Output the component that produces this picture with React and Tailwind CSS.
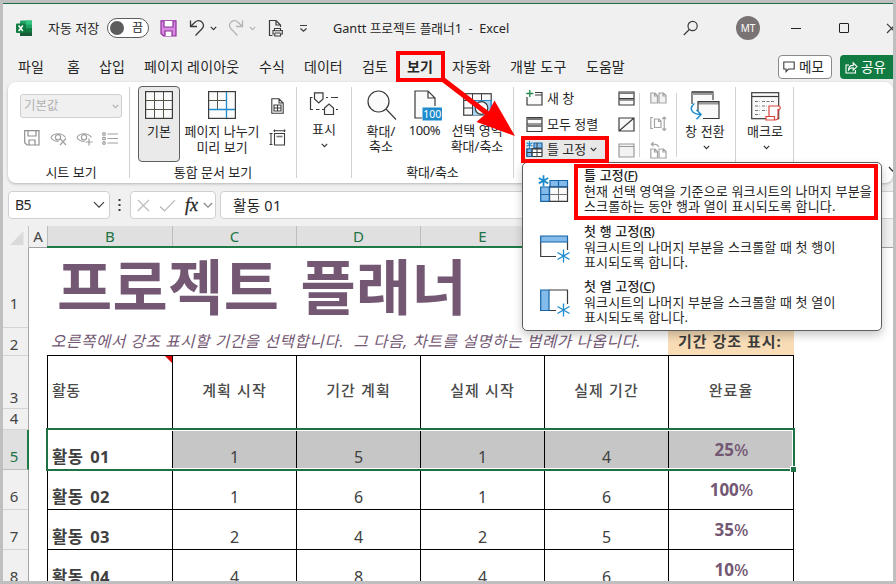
import React from "react";

const Svg = ({ w, h, className = "", children }) => (
  <svg width={w} height={h} viewBox={`0 0 ${w} ${h}`} fill="none" stroke="#3b3b3b" strokeWidth="1.2" className={"block shrink-0 " + className}>
    {children}
  </svg>
);

const Chevron = ({ className = "", color = "#333" }) => (
  <Svg w={7} h={5} className={className}>
    <path d="M0.8 0.9 L3.5 3.6 L6.2 0.9" stroke={color} strokeWidth="1.2" />
  </Svg>
);

const Line = ({ children, className = "" }) => (
  <div className={"h-4 whitespace-nowrap text-center text-[13px] leading-4 " + className}>{children}</div>
);

const Divider = ({ className = "" }) => <div className={"h-[91px] w-px shrink-0 bg-[#d2d2d2] " + className} />;

function TitleBar() {
  return (
    <div className="flex h-12 shrink-0 items-center">
      <Svg w={17} h={17} className="ml-[13px]">
        <g stroke="none">
          <rect x="4" y="0.5" width="12" height="15.5" rx="1" fill="#21a366" />
          <rect x="10" y="0.5" width="6" height="4" fill="#33c481" />
          <rect x="4" y="4.5" width="6" height="4" fill="#107c41" />
          <rect x="4" y="8.5" width="12" height="7.5" fill="#185c37" />
          <rect x="10" y="8.5" width="6" height="4" fill="#107c41" />
          <rect x="0" y="3.5" width="9.5" height="9.5" rx="1" fill="#107c41" />
        </g>
        <path d="M2.6 5.5 L6.8 11 M6.8 5.5 L2.6 11" stroke="#fff" strokeWidth="1.5" />
      </Svg>
      <span className="ml-[15px] w-[59px] shrink-0 whitespace-nowrap text-[13px] leading-4">자동 저장</span>
      <div className="flex h-5 w-[42px] shrink-0 items-center rounded-full border border-[#5c5c5c] bg-white pl-[2px]">
        <div className="h-[14px] w-[14px] rounded-full bg-[#5d5d5d]" />
        <span className="ml-[8px] text-[12px] leading-4">끔</span>
      </div>
      <Svg w={17} h={17} className="ml-[11px]">
        <path d="M1 0.8 H16 V16 H3.5 L1 13.5 Z" fill="#d78be0" stroke="#8f2e9c" />
        <path d="M4 1 V7 H13 V1" fill="#fff" stroke="#8f2e9c" />
        <path d="M5 16 V11 H12 V16" fill="#fff" stroke="#8f2e9c" />
      </Svg>
      <Svg w={16} h={18} className="ml-[12px]">
        <path d="M1.5 1.5 V7.5 H8 M1.5 7.5 L6 3.2 C8.5 1 11.5 1.4 13.2 3.4 C15 5.6 14.6 8.2 12.8 10 L6.5 16.5" strokeWidth="1.3" />
      </Svg>
      <Chevron className="ml-[5px]" />
      <Svg w={16} h={18} className="ml-[11px]">
        <path d="M14.5 1.5 V7.5 H8 M14.5 7.5 L10 3.2 C7.5 1 4.5 1.4 2.8 3.4 C1 5.6 1.4 8.2 3.2 10 L9.5 16.5" stroke="#b3b3b3" strokeWidth="1.3" />
      </Svg>
      <Chevron className="ml-[5px]" color="#b3b3b3" />
      <Svg w={16} h={18} className="ml-[12px]">
        <path d="M4.5 16.5 H1.5 V1.5 H8 L12.5 6 V8 M8 1.5 V6 H12.5" />
        <path d="M6.5 9.5 H12.5 V11.5 H14.3 V15 H12.5 V17 H6.8 V15 H5 V11.5 H6.5 Z M6.5 11.7 H12.5 M6.8 14 H12.5" strokeWidth="1.1" />
      </Svg>
      <Svg w={9} h={9} className="ml-[15px]">
        <path d="M1 1.5 H8 M1.5 4.5 L4.5 7.3 L7.5 4.5" />
      </Svg>
      <span className="ml-[25px] w-[350px] shrink-0 whitespace-pre text-[12.7px] leading-4">{"Gantt 프로젝트 플래너1  -  Excel"}</span>
      <Svg w={16} h={16}>
        <circle cx="9.6" cy="6" r="4.6" />
        <path d="M6.3 9.5 L0.8 15" />
      </Svg>
      <div className="ml-[37px] flex h-6 w-6 shrink-0 items-center justify-center rounded-full bg-[#7a7374] text-[10px] text-white">MT</div>
      <div className="ml-[31px] h-px w-[10px] shrink-0 bg-[#222]" />
      <div className="ml-[38px] h-[10px] w-[10px] shrink-0 rounded-[1px] border border-[#222]" />
      <Svg w={11} h={11} className="ml-[37px]">
        <path d="M1 0.8 L10 10 M10 0.8 L1 10" />
      </Svg>
    </div>
  );
}

function Tabs() {
  return (
    <div className="flex h-[30px] shrink-0 items-center whitespace-nowrap pl-[15px] text-[14px] leading-5">
      <span className="w-[49px] shrink-0">파일</span>
      <span className="w-[32px] shrink-0">홈</span>
      <span className="w-[45px] shrink-0">삽입</span>
      <span className="w-[115px] shrink-0 tracking-[0.2px]">페이지 레이아웃</span>
      <span className="w-[45px] shrink-0">수식</span>
      <span className="w-[58px] shrink-0">데이터</span>
      <span className="w-[45px] shrink-0">검토</span>
      <span className="mr-[19px] mt-[3px] w-[26px] shrink-0 border-b-2 border-[#1e7145] pb-px font-bold">보기</span>
      <span className="w-[58px] shrink-0">자동화</span>
      <span className="w-[76px] shrink-0 tracking-[0.3px]">개발 도구</span>
      <span className="w-[192px] shrink-0">도움말</span>
      <div className="flex h-6 w-[54px] shrink-0 items-center rounded border border-[#8a8a8a] bg-white pl-[4px] text-[13.5px] leading-4">
        <Svg w={12} h={12}>
          <path d="M0.8 1 H11.2 V8 H5.5 L3 10.6 V8 H0.8 Z" strokeWidth="1.1" />
        </Svg>
        <span className="ml-[4px]">메모</span>
      </div>
      <div className="ml-[8px] flex h-6 w-[60px] shrink-0 items-center rounded bg-[#107c41] pl-[5px] text-[13.5px] leading-4 text-white">
        <Svg w={13} h={13}>
          <path d="M4 4 H1 V12 H10.5 V9 M3.5 9 C3.5 6 5.5 4.4 8.2 4.4 V1.8 L12 5.6 L8.2 9.2 V6.8 C6 6.8 4.5 7.5 3.5 9 Z" stroke="#fff" strokeWidth="1.1" />
        </Svg>
        <span className="ml-[3px]">공유</span>
      </div>
    </div>
  );
}

const GridIcon = () => (
  <Svg w={28} h={28}>
    <rect x="0.6" y="0.6" width="26.8" height="26.8" fill="#fafafa" />
    <path d="M9.5 1 V27 M18.5 1 V27 M1 9.5 H27 M1 18.5 H27" stroke="#555547" strokeWidth="1" />
  </Svg>
);

const Eye = ({ mark }) => (
  <Svg w={17} h={15}>
    <g stroke="#a0a0a0">
      <path d="M0.8 6.5 C4 1.5 12 1.5 15.5 6.5 M0.8 6.5 C3 9.8 6 10.5 8.5 10.3" />
      <circle cx="8" cy="6.3" r="2.6" />
      <path d={mark} />
    </g>
  </Svg>
);

function SheetViewGroup() {
  return (
    <div className="flex w-[121px] shrink-0 flex-col pl-[12px] pt-[12px]">
      <div className="flex h-[24px] w-[102px] items-center justify-between rounded-[3px] border border-[#d0d0d0] bg-[#f0f0f0] pl-[3px] pr-[2px] text-[12.5px] leading-4 text-[#b0b0b0]">
        <span>기본값</span>
        <Chevron color="#b0b0b0" />
      </div>
      <div className="mt-[12px] flex h-4 items-center pl-[4px]">
        <Svg w={16} h={16}>
          <g stroke="#8f8f8f">
            <path d="M0.7 0.7 H15 V15 H3 L0.7 12.7 Z M4 1 V6 H12 V1 M5 15 V10 H11 V15" />
          </g>
        </Svg>
        <div className="ml-[10px]"><Eye mark="M10 7.5 L16 14 M16 7.5 L10 14" /></div>
        <div className="ml-[9px]"><Eye mark="M13 7.5 V14.5 M9.5 11 H16.5" /></div>
        <Svg w={16} h={13} className="ml-[9px]">
          <path d="M5.5 2 H16 M5.5 6.5 H16 M5.5 11 H16" stroke="#a0a0a0" />
          <path d="M0.8 0.8 H3.2 V3.2 H0.8 Z M0.8 5.3 H3.2 V7.7 H0.8 Z M0.8 9.8 H3.2 V12.2 H0.8 Z" stroke="#8f8f8f" strokeWidth="1" />
        </Svg>
      </div>
      <Line className="mt-[18px] w-[102px]">시트 보기</Line>
    </div>
  );
}

function WorkbookViewsGroup() {
  return (
    <div className="flex w-[166px] shrink-0 flex-col pl-[8px] pt-[4px]">
      <div className="flex h-[76px]">
        <div className="flex w-[42px] flex-col items-center rounded border border-[#5f5f5f] bg-[#eaeaea] pt-[4px]">
          <GridIcon />
          <Line className="mt-[4px]">기본</Line>
        </div>
        <div className="ml-[4px] flex w-[76px] flex-col items-center pt-[5px]">
          <Svg w={28} h={28}>
            <rect x="0.6" y="0.6" width="26.8" height="26.8" fill="#fafafa" />
            <path d="M9.5 1 V18 M1 9.5 H18" stroke="#555547" strokeWidth="1" />
            <path d="M18.5 1 V27 M1 18.5 H27" stroke="#1e8bcd" strokeWidth="1.3" />
          </Svg>
          <Line className="mt-[4px]">페이지 나누기</Line>
          <Line>미리 보기</Line>
        </div>
        <div className="ml-[9px] flex w-[17px] flex-col items-center pt-[12px]">
          <Svg w={13} h={16}>
            <path d="M0.8 0.8 H8 L12.2 5 V15.2 H0.8 Z M8 0.8 V5 H12.2 M3 7 H10 V13 H3 Z M6.5 7 V13 M3 10 H10" strokeWidth="1.1" />
          </Svg>
          <Svg w={17} h={17} className="mt-[15px]">
            <path d="M0.5 4.5 H3.5 M2 4.5 V15.5 M0.5 15.5 H3.5 M5.5 0.5 V3 M15.5 0.5 V3 M4.5 1.8 H16.5 M5.5 4.5 H15.5 V16 H5.5 Z" strokeWidth="1.1" />
            <path d="M7.5 7.5 H13.5" stroke="#777" strokeWidth="1.6" />
          </Svg>
        </div>
      </div>
      <Line className="mt-[2px] w-[150px]">통합 문서 보기</Line>
    </div>
  );
}

function ShowGroup() {
  return (
    <div className="flex w-[54px] shrink-0 flex-col items-center pt-[10px]">
      <Svg w={30} h={24}>
        <path d="M3.5 5.5 H1.5 V17.5 H4 M7 17.5 H10.5 M17 5.5 H19 M22 5.5 H29 M13 17.5 H15 M27 17.5 H29" />
        <path d="M5.5 0.8 H14 V7 L9.8 11 L5.5 7 Z M15.5 22.5 V16 L20 12 L24.5 16 V22.5 Z" fill="#fafafa" />
      </Svg>
      <Line className="mt-[5px]">표시</Line>
      <Chevron className="mt-[6px]" />
    </div>
  );
}

function ZoomGroup() {
  return (
    <div className="flex w-[161px] shrink-0 flex-col pt-[8px]">
      <div className="flex h-[74px]">
        <div className="flex w-[58px] flex-col items-center">
          <Svg w={30} h={31} className="ml-px">
            <circle cx="11.5" cy="11.5" r="10.5" fill="#fafafa" />
            <path d="M19 19 L29 29.5" />
          </Svg>
          <Line className="mt-[2px]">확대/</Line>
          <Line className="-mt-px">축소</Line>
        </div>
        <div className="flex w-[32px] flex-col items-center">
          <Svg w={28} h={31} className="ml-[3px]">
            <path d="M8 28 H1 V1 H14 L21 8 V16 M14 1 V8 H21" fill="#fafafa" />
            <rect x="8.5" y="17.5" width="19.5" height="13" fill="#1e8bcd" stroke="none" />
            <text x="18.2" y="27.9" textAnchor="middle" fontSize="10.5" fill="#fff" stroke="none">100</text>
          </Svg>
          <Line className="mt-px -mr-[1px] -ml-[4px] tracking-[-0.4px]">100%</Line>
        </div>
        <div className="flex w-[70px] flex-col items-center">
          <Svg w={29} h={31}>
            <rect x="0.7" y="3.7" width="27.5" height="21.5" fill="#fafafa" />
            <rect x="9.5" y="10.5" width="19" height="15" fill="#a7d3f2" stroke="none" />
            <path d="M9.5 3.7 V25 M18.5 3.7 V10 M1 10.5 H28 M1 18 H9" strokeWidth="1" />
            <path d="M9.5 10.5 H28 V25" stroke="#1e8bcd" />
            <circle cx="18.5" cy="18" r="6.3" fill="#fafafa" />
          </Svg>
          <Line className="mt-px">선택 영역</Line>
          <Line>확대/축소</Line>
        </div>
      </div>
      <Line className="mt-0">확대/축소</Line>
    </div>
  );
}

const WindowIcon = ({ children }) => <Svg w={17} h={17}>{children}</Svg>;

function WindowGroup() {
  return (
    <div className="flex w-[221px] shrink-0">
      <div className="flex w-[97px] flex-col pl-[12px] pt-[3px] text-[13px] leading-4">
        <div className="flex h-[26px] items-center">
          <WindowIcon>
            <path d="M1 7 V15 H16 V2.5 H9 M9 5 H16" fill="#fafafa" />
            <path d="M3.8 0 V7 M0.3 3.5 H7.3" stroke="#1e8a4b" strokeWidth="1.3" />
          </WindowIcon>
          <span className="ml-[4px]">새 창</span>
        </div>
        <div className="flex h-[26px] items-center whitespace-nowrap">
          <WindowIcon>
            <path d="M1 1.5 H16 V15.5 H1 Z M1 8 H16" fill="#fafafa" />
            <path d="M1 3 H16 M1 10 H16" stroke="#777" strokeWidth="2" />
          </WindowIcon>
          <span className="ml-[4px]">모두 정렬</span>
        </div>
        <div className="-ml-[3px] flex h-[24px] w-[84px] items-center whitespace-nowrap bg-[#e8e8e8] pl-[3px]">
          <WindowIcon>
            <path d="M1 8 H16 V15.5 H1 Z" fill="#fff" />
            <path d="M8 2 H16 V7 H8 Z M1 8 H6 V15.5 H1 Z" fill="#83bbea" stroke="#1565a8" />
            <path d="M6 8 V15.5 M11 2 V15.5 M6 11.5 H16 M1 11.5 H6 M6 7.5 H16" strokeWidth="1" />
            <path d="M3.5 0 V7 M0.5 1.7 L6.5 5.3 M6.5 1.7 L0.5 5.3" stroke="#1e8bcd" strokeWidth="1.2" />
          </WindowIcon>
          <span className="ml-[4px]">틀 고정</span>
          <Chevron className="ml-[4px]" />
        </div>
      </div>
      <div className="flex w-[28px] flex-col items-center pl-[2px] pt-[9px]">
        <WindowIcon><path d="M1 1 H16 V14 H1 Z M1 7.7 H16" fill="#fafafa" /><path d="M1 2.2 H16 M1 9 H16" stroke="#777" strokeWidth="1.4" /></WindowIcon>
        <div className="h-[9px]" />
        <WindowIcon><path d="M1 1 H16 V14 H1 Z M1 14 L16 1" fill="#fafafa" /></WindowIcon>
        <div className="h-[9px]" />
        <WindowIcon><path d="M1 1 H16 V14 H1 Z M1 3.5 H16" fill="#f2f2f2" stroke="#9a9a9a" /></WindowIcon>
      </div>
      <div className="mt-[11px] h-[64px] w-px bg-[#d2d2d2]" />
      <div className="flex w-[36px] flex-col items-center pt-[8px]">
        <WindowIcon><path d="M0.8 3 H5 L7.5 5.5 V13 H0.8 Z M9 3 H13.5 L16 5.5 V13 H9 Z M4.5 3 V6 H7.5 M13 3 V6 H16" fill="#f2f2f2" stroke="#a5a5a5" /></WindowIcon>
        <div className="h-[9px]" />
        <WindowIcon><path d="M3 1.5 H0.8 V12.5 H3 M4.5 3 H9 L11 5 V11.5 H4.5 Z M8.5 3 V5.5 H11 M14.2 1 V14.5 M12.2 3 L14.2 1 L16.2 3 M12.2 12.5 L14.2 14.5 L16.2 12.5" stroke="#a5a5a5" /></WindowIcon>
        <div className="h-[9px]" />
        <WindowIcon><path d="M0.8 7 H5 L7.5 9.5 V16 H0.8 Z M9 7 H13.5 L16 9.5 V16 H9 Z M4.5 7 V10 H7.5 M13 7 V10 H16 M8.5 5 C8.5 2.5 6 2 1.5 2.2 M3.5 0 L1.3 2.2 L3.5 4.4" fill="none" stroke="#a5a5a5" /></WindowIcon>
      </div>
      <div className="mt-[11px] h-[64px] w-px bg-[#d2d2d2]" />
      <div className="flex w-[58px] flex-col items-center pt-[9px]">
        <Svg w={30} h={29} className="-ml-[3px]">
          <path d="M2 13 V1 H23 V9" fill="#fafafa" />
          <path d="M2 2.5 H23" stroke="#999" strokeWidth="3" />
          <path d="M2 1 H23" />
          <rect x="8" y="10.5" width="21" height="17" fill="#fafafa" stroke="none" />
          <path d="M8 12 H29" stroke="#999" strokeWidth="3" />
          <path d="M8 20 V10.5 H29 V27.5 H13" />
          <path d="M4.5 12.5 C-1 16.5 0.5 23 10.5 23.6 M6.5 18.8 L11 23.6 L6.5 28.3" stroke="#1e8bcd" strokeWidth="1.5" />
        </Svg>
        <Line className="-ml-[2px] mt-[3px] tracking-[0.2px]">창 전환</Line>
        <Chevron className="mt-[6px]" />
      </div>
    </div>
  );
}

function MacroGroup() {
  return (
    <div className="flex w-[57px] shrink-0 flex-col items-center pt-[10px]">
      <Svg w={30} h={29} className="ml-[3px]">
        <rect x="0.7" y="0.7" width="27" height="26" fill="#fafafa" />
        <path d="M0.7 4.5 H27.7" />
        <path d="M4 9.5 H9 M4 14 H9 M4 18.5 H9 M4 22.5 H9 M11 9.5 H24 M11 14 H16 M11 18.5 H16" stroke="#777" strokeWidth="1" strokeDasharray="3 1.5" />
        <path d="M18 25 V14 H28.5 C30 16 29 18 27 17.5 V26 C26.5 28 25 28 24 28 H15 V24.5 H23.5 V27.5" fill="#fff" stroke="#d8473f" />
      </Svg>
      <Line className="ml-px mt-[2px]">매크로</Line>
      <Chevron className="ml-[3px] mt-[6px]" />
    </div>
  );
}

function Ribbon() {
  return (
    <div className="ml-[5px] flex h-[101px] w-[885px] shrink-0 rounded-lg bg-white shadow-[0_1px_3px_rgba(0,0,0,0.25)]">
      <SheetViewGroup />
      <Divider className="mt-[5px]" />
      <WorkbookViewsGroup />
      <Divider className="mt-[5px]" />
      <ShowGroup />
      <Divider className="mt-[5px]" />
      <ZoomGroup />
      <Divider className="mt-[5px]" />
      <WindowGroup />
      <Divider className="mt-[5px]" />
      <MacroGroup />
      <Divider className="mt-[5px]" />
      <Svg w={9} h={7} className="ml-[94px] mt-[84px]">
        <path d="M1 1 L4.5 5 L8 1" />
      </Svg>
    </div>
  );
}

function FormulaBar() {
  return (
    <div className="mt-[8px] flex h-[28px] shrink-0 pl-[5px]">
      <div className="flex w-[102px] shrink-0 items-center justify-between rounded border border-[#d0d0d0] bg-white pl-[6px] pr-[4px] text-[14px] leading-4">
        <span className="tracking-[-0.6px]">B5</span>
        <Svg w={12} h={8}>
          <path d="M1 1.2 L6 6.2 L11 1.2" />
        </Svg>
      </div>
      <Svg w={3} h={14} className="ml-[8px] mt-[7px]">
        <path d="M0.5 2 H2.5 M0.5 7 H2.5 M0.5 12 H2.5" strokeWidth="2" />
      </Svg>
      <div className="ml-[9px] flex w-[86px] shrink-0 items-center rounded border border-[#d0d0d0] bg-white pl-[6px]">
        <Svg w={13} h={13}>
          <path d="M0.8 0.8 L12 12 M12 0.8 L0.8 12" stroke="#b9b9b9" />
        </Svg>
        <Svg w={17} h={13} className="ml-[9px]">
          <path d="M1 7.5 L5.5 11.8 L16 1.2" stroke="#b9b9b9" />
        </Svg>
        <span className="ml-[9px] w-[17px] font-['Liberation_Serif',serif] text-[18px] italic leading-5 [-webkit-text-stroke:0.3px_#222]">fx</span>
        <Svg w={10} h={7} className="ml-px">
          <path d="M0.8 1 L5 5.2 L9.2 1" stroke="#888" />
        </Svg>
      </div>
      <div className="ml-[4px] flex w-[690px] shrink-0 items-center rounded border border-[#d0d0d0] bg-white pb-px pl-[12px] text-[14.5px] leading-4 tracking-[0.3px]">활동 01</div>
    </div>
  );
}

const headerCell = "flex items-center justify-center border-r border-[#bdbdbd] bg-[#e0e0e0] text-[15px] leading-5 text-[#217346] h-full";

function ColumnHeaders() {
  return (
    <div className="mt-[7px] flex h-[22px] shrink-0">
      <div className="flex w-[26px] items-end justify-end border-r border-[#c4c4c4] pb-[3px] pr-[4px]">
        <Svg w={14} h={14}>
          <path d="M13.5 0 V14 H0 Z" fill="#dadada" stroke="none" />
        </Svg>
      </div>
      <div className="flex w-[18px] items-center justify-center border-b border-[#a0a0a0] pb-px text-[15px] leading-5 text-[#444]">A</div>
      <div className="flex border-b-2 border-[#1e7b45]">
        <div className={headerCell + " w-[126px] border-l"}>B</div>
        <div className={headerCell + " w-[124px]"}>C</div>
        <div className={headerCell + " w-[124px]"}>D</div>
        <div className={headerCell + " w-[124px]"}>E</div>
        <div className={headerCell + " w-[124px]"} />
        <div className={headerCell + " w-[125px]"} />
      </div>
      <div className="w-[99px] border-b border-[#a0a0a0]" />
    </div>
  );
}

const rowNum = "flex shrink-0 items-end justify-center border-b border-[#d4d4d4] pr-[3px] text-[15px] leading-5 text-[#444]";

function RowHeaders() {
  return (
    <div className="flex w-[26px] shrink-0 flex-col border-r border-[#a6a6a6]">
      <div className={rowNum + " h-[80px] pb-[14px]"}>1</div>
      <div className={rowNum + " h-[28px] pb-px"}>2</div>
      <div className={rowNum + " h-[53px] pb-px"}>3</div>
      <div className={rowNum + " h-[21px] pb-px"}>4</div>
      <div className="-mr-px flex h-[40px] shrink-0 items-end justify-center border-b border-r-2 border-[#1e7b45] border-b-[#bdbdbd] bg-[#e0e0e0] pb-[3px] pr-[2px] text-[15px] leading-5 text-[#217346]">5</div>
      <div className={rowNum + " h-[40px] pb-[3px]"}>6</div>
      <div className={rowNum + " h-[40px] pb-[3px]"}>7</div>
      <div className={rowNum + " h-[40px] pb-[3px]"}>8</div>
    </div>
  );
}

const rows = [
  ["01", 1, 5, 1, 4, "25"],
  ["02", 1, 6, 1, 6, "100"],
  ["03", 2, 4, 2, 5, "35"],
  ["04", 4, 8, 4, 6, "10"],
];

const heads = ["계획 시작", "기간 계획", "실제 시작", "실제 기간"];

function Sheet() {
  return (
    <div className="flex h-[333px] shrink-0 overflow-hidden">
      <RowHeaders />
      <div className="flex w-[864px] flex-col bg-white pl-[18px]">
        <div className="h-[80px] shrink-0 whitespace-nowrap pl-[10px] text-[60px] font-bold leading-[78px] tracking-[0.4px] text-[#735773] [word-spacing:5px]">프로젝트 플래너</div>
        <div className="flex h-[27px] shrink-0">
          <div className="w-[621px] whitespace-pre pl-[4px] text-[15.5px] italic leading-[26px] tracking-[0.71px] text-[#735773]">{"오른쪽에서 강조 표시할 기간을 선택합니다.  그 다음, 차트를 설명하는 범례가 나옵니다."}</div>
          <div className="w-[126px] whitespace-nowrap bg-[#f7dcb6] pl-[10px] text-[15px] font-bold leading-[26px] tracking-[1px] text-[#3c3c3c]">기간 강조 표시:</div>
        </div>
        <div className="relative w-[747px] shrink-0">
          <div className="flex h-[74px] border-l border-t border-black text-[15px] font-medium leading-[68px] text-[#4a4a4a]">
            <div className="flex w-[125px] justify-between border-r border-black pl-[4px]">
              <span className="tracking-[0.4px]">활동</span>
              <Svg w={7} h={7}>
                <path d="M0 0 H7 V7 Z" fill="#e00000" stroke="none" />
              </Svg>
            </div>
            {heads.map((h) => (
              <div key={h} className="w-[124px] border-r border-black text-center tracking-[1.1px]">{h}</div>
            ))}
            <div className="w-[125px] border-r border-black text-center tracking-[1px]">완료율</div>
          </div>
          {rows.map(([n, a, b, c, d, p], i) => {
            const fill = i === 0 ? " bg-[#c6c6c6]" : "";
            const num = "flex w-[124px] items-end justify-center border-r border-black pb-[2px] text-[16px] leading-5" + fill;
            return (
              <div key={n} className={(i === 0 ? "h-[41px]" : "h-[40px]") + " flex border-b border-l border-black text-[#404040]"}>
                <div className="flex w-[125px] items-end whitespace-pre border-r border-black pb-[2px] pl-[4px] text-[16.5px] font-bold leading-5 tracking-[0.5px] [word-spacing:2px]">{"활동 " + n}</div>
                <div className={num}>{a}</div>
                <div className={num}>{b}</div>
                <div className={num}>{c}</div>
                <div className={num}>{d}</div>
                <div className={"flex w-[125px] items-center justify-center border-r border-black pl-px pt-px text-[17px] font-bold leading-5 text-[#735773]" + fill}>
                  {p}<span className="font-medium">%</span>
                </div>
              </div>
            );
          })}
          <div className="absolute -left-px top-[73px] h-[43px] w-[749px] border-2 border-[#1e7145]">
            <div className="h-full w-full border border-white" />
            <div className="absolute -bottom-[3px] -right-[3px] h-[6px] w-[6px] border-l border-t border-white bg-[#1e7145]" />
          </div>
        </div>
      </div>
    </div>
  );
}

function MenuItem({ icon, title, keyName, lines, className = "" }) {
  return (
    <div className={"flex " + className}>
      <div className="w-[61px] shrink-0 pl-[15px]">{icon}</div>
      <div className="whitespace-nowrap text-[13px] leading-[15px] tracking-[0.16px]">
        <div className="font-medium leading-[17px]">{title}<span className="tracking-[-0.5px]">(<u>{keyName}</u>)</span></div>
        {lines.map((l) => <div key={l}>{l}</div>)}
      </div>
    </div>
  );
}

function FreezeMenu() {
  return (
    <div className="absolute left-[522px] top-[162px] flex h-[169px] w-[360px] flex-col rounded-[5px] border border-[#5e5e5e] bg-white pt-[4px] shadow-[0_4px_10px_rgba(0,0,0,0.22)]">
      <MenuItem
        className="h-[56px]"
        title="틀 고정"
        keyName="F"
        lines={["현재 선택 영역을 기준으로 워크시트의 나머지 부분을", "스크롤하는 동안 행과 열이 표시되도록 합니다."]}
        icon={
          <Svg w={32} h={34} className="mt-[7px]">
            <path d="M12 6.5 H29.5 V13 H12 Z M2.7 13 H11.5 V27.3 H2.7 Z" fill="#83bbea" stroke="#1565a8" />
            <path d="M11.5 13 H29.5 V27.3 H11.5 Z" fill="#fafafa" />
            <path d="M20.5 13 V27.3 M11.5 20.5 H29.5" stroke="#777" strokeWidth="1" />
            <path d="M20.5 6.5 V13 M2.7 20.5 H11.5 M11.5 27.3 V13 H29.5" stroke="#1565a8" />
            <path d="M5.5 1.2 V12.2 M0.8 4 L10.2 9.4 M10.2 4 L0.8 9.4" stroke="#1e8bcd" strokeWidth="1.8" />
          </Svg>
        }
      />
      <MenuItem
        className="h-[56px]"
        title="첫 행 고정"
        keyName="R"
        lines={["워크시트의 나머지 부분을 스크롤할 때 첫 행이", "표시되도록 합니다."]}
        icon={
          <Svg w={33} h={34} className="mt-[10px]">
            <path d="M29.5 17 V8 M2.7 8 V23.5 H18" fill="none" />
            <path d="M2.7 3 H29.5 V9 H2.7 Z" fill="#83bbea" stroke="#1565a8" />
            <path d="M25.5 16.5 V29.5 M19.5 19.5 L31.5 26.5 M31.5 19.5 L19.5 26.5" stroke="#1e8bcd" strokeWidth="1.3" />
          </Svg>
        }
      />
      <MenuItem
        className="h-[52px]"
        title="첫 열 고정"
        keyName="C"
        lines={["워크시트의 나머지 부분을 스크롤할 때 첫 열이", "표시되도록 합니다."]}
        icon={
          <Svg w={33} h={34} className="mt-[9px]">
            <path d="M11 3 H29.5 V17 M11 23.5 H18" fill="none" />
            <path d="M2.7 3 H11 V23.5 H2.7 Z" fill="#83bbea" stroke="#1565a8" />
            <path d="M25.5 16.5 V29.5 M19.5 19.5 L31.5 26.5 M31.5 19.5 L19.5 26.5" stroke="#1e8bcd" strokeWidth="1.3" />
          </Svg>
        }
      />
    </div>
  );
}

function Annotations() {
  return (
    <>
      <div className="absolute left-[396px] top-[51px] h-[31px] w-[49px] border-4 border-[#ff0000]" />
      <div className="absolute left-[521px] top-[136px] h-[27px] w-[88px] border-4 border-[#ff0000]" />
      <div className="absolute left-[574px] top-[164px] h-[56px] w-[304px] border-4 border-[#ff0000]" />
      <svg width="80" height="62" viewBox="0 0 80 62" className="absolute left-[438px] top-[76px]">
        <path d="M3 2 L50 38" stroke="#ff0000" strokeWidth="5" />
        <path d="M77 60 L56.5 24.5 L51 35 L38.5 46 Z" fill="#ff0000" />
      </svg>
    </>
  );
}

export default function App() {
  return (
    <div className="relative h-[584px] w-[896px] overflow-hidden bg-[#bfbfbf] p-[3px] font-['Noto_Sans','Noto_Sans_CJK_KR',sans-serif] text-[#262626]">
      <div className="flex h-[578px] w-[890px] flex-col overflow-hidden border-t border-[#1e6b48] bg-[#f0f0f0]">
        <TitleBar />
        <Tabs />
        <Ribbon />
        <FormulaBar />
        <ColumnHeaders />
        <Sheet />
      </div>
      <FreezeMenu />
      <Annotations />
    </div>
  );
}
